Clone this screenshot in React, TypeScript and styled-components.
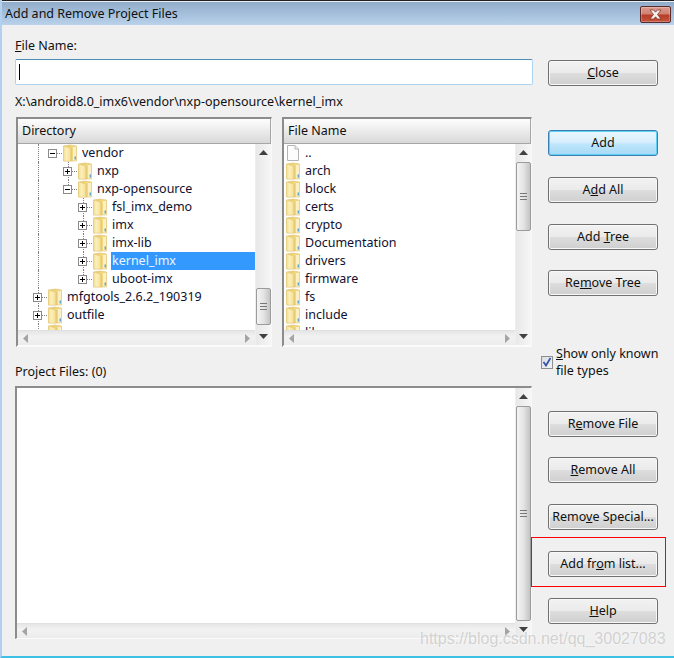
import React from "react";
import styled, { createGlobalStyle } from "styled-components";

const Global = createGlobalStyle`
  html, body { margin: 0; padding: 0; background: #f0f0f0; }
  * { box-sizing: border-box; }
  body { font-family: "Noto Sans", "DejaVu Sans", sans-serif; font-size: 12.5px; color: #101010; }
`;

const Window = styled.div`
  position: relative; width: 674px; height: 658px; overflow: hidden; background: #f0f0f0;
  display: flex; flex-direction: column;
  border-left: 2px solid #b4d0f0; border-bottom: 2px solid #3cc0e4;
`;
const TitleBar = styled.div`
  height: 25px; margin-left: -2px; padding: 0 3px 0 5px; flex: none;
  display: flex; align-items: center; justify-content: space-between;
  border-top: 1px solid #202020;
  background: linear-gradient(#8fabc9, #b9d1ea);
  box-shadow: inset 0 1px 0 #e8eef4;
`;
const Title = styled.span`font-size: 12.5px; color: #101010;`;
const CloseX = styled.div`
  width: 31px; height: 17px; margin-top: 2px; border: 1px solid #5a2a2a; border-radius: 2px;
  display: flex; align-items: center; justify-content: center;
  background: linear-gradient(#dd9a8e 0%, #cf8274 45%, #b83c26 55%, #c4553e 100%);
  box-shadow: inset 0 0 0 1px rgba(255,255,255,.25);
`;
const Body = styled.div`
  flex: 1; display: flex; padding-left: 13px;
`;
const LeftCol = styled.div`width: 518px; display: flex; flex-direction: column; padding-top: 12px;`;
const RightCol = styled.div`width: 134px; margin-left: 7px; display: flex; flex-direction: column; padding-top: 35px;`;
const Label = styled.div<{ $top?: number }>`
  height: 16px; line-height: 18px; margin-top: ${p => p.$top ?? 0}px; white-space: nowrap;
`;
const Input = styled.div`
  height: 26px; margin-top: 6px; background: #fff; display: flex; align-items: center; padding-left: 3px;
  border: 1px solid #aed3ee; border-top-color: #4f8db8; border-radius: 2px;
`;
const Caret = styled.span`width: 1px; height: 16px; background: #000;`;
const PanelRow = styled.div`display: flex; gap: 10px; margin: 8px 0 0 1px; height: 230px;`;
const Panel = styled.div<{ $w: number }>`
  width: ${p => p.$w}px; display: flex; flex-direction: column; background: #fff; overflow: hidden;
  border-top: 2px solid #8c8c8c; border-left: 2px solid #8c8c8c;
  border-right: 1px solid #f8f8f8; border-bottom: 2px solid #fbfbfb;
`;
const Header = styled.div`
  height: 25px; flex: none; padding-left: 4px; line-height: 23px;
  background: linear-gradient(#fefefe, #d8d8d8);
  border-bottom: 1px solid #a6a6a6; border-right: 1px solid #a6a6a6;
`;
const PanelBody = styled.div`flex: 1; min-height: 0; display: grid; grid-template-columns: 1fr 16px; background: #fff;`;
const Main = styled.div`min-width: 0; min-height: 0; display: flex; flex-direction: column;`;
const Rows = styled.div<{ $pad: number }>`flex: 1; min-height: 0; overflow: hidden; padding-left: ${p => p.$pad}px;`;
const HBar = styled.div`
  height: 15px; flex: none; display: flex; align-items: center; justify-content: space-between; padding: 0 5px;
  background: linear-gradient(#e6e6e6, #f2f2f2 40%, #ececec); border-top: 1px solid #e0e0e0;
`;
const VBar = styled.div`
  display: flex; flex-direction: column; align-items: center;
  background: linear-gradient(90deg, #e8e8e8, #f6f6f6); border-left: 1px solid #eee;
`;
const VTrack = styled.div`flex: 1; width: 100%; min-height: 0;`;
const Arrow = styled.svg`flex: none; display: block;`;
const ArrowBox = styled.div`height: 17px; flex: none; display: flex; align-items: center; justify-content: center;`;
const Thumb = styled.div<{ $top: number; $h: number }>`
  width: 15px; height: ${p => p.$h}px; margin-top: ${p => p.$top}px;
  border: 1px solid #9b9b9b; border-radius: 2px;
  background: linear-gradient(90deg, #f4f4f4, #e4e4e4 50%, #c4c4c4);
  display: flex; align-items: center; justify-content: center;
`;
const Grip = styled.div`
  width: 7px; height: 7px;
  background: repeating-linear-gradient(#777 0 1px, transparent 1px 3px);
`;
const TreeRow = styled.div`height: 18px; display: flex; align-items: stretch;`;
const GuideCell = styled.div`width: 15px; flex: none; display: flex;`;
const Guide = styled.div`margin-left: 8px; border-left: 1px dotted #808080; height: 100%;`;
const RowLabel = styled.div<{ $sel?: boolean }>`
  flex: 1; margin-left: 4px; padding-left: 1px; line-height: 17px; white-space: nowrap;
  background: ${p => (p.$sel ? "#3399ff" : "transparent")};
  color: ${p => (p.$sel ? "#eef6ff" : "#101030")};
`;
const ExpanderSvg = styled.svg`flex: none; width: 18px; height: 18px; display: block;`;
const IconSvg = styled.svg`flex: none; width: 14px; height: 18px; display: block;`;
const ListBox = styled.div`
  height: 253px; margin-top: 7px; width: 517px; display: flex; flex-direction: column; overflow: hidden;
  border-top: 2px solid #8c8c8c; border-left: 2px solid #8c8c8c; border-right: 1px solid #f8f8f8; border-bottom: 1px solid #fbfbfb;
`;
const Btn = styled.div<{ $top: number; $active?: boolean }>`
  width: 110px; height: 26px; margin: ${p => p.$top}px 0 0 8px; flex: none; padding-bottom: 2px;
  display: flex; align-items: center; justify-content: center; white-space: nowrap;
  border-radius: 3px; color: #101010;
  border: 1px solid ${p => (p.$active ? "#3c7fb1" : "#707070")};
  background: ${p => (p.$active
    ? "linear-gradient(#eaf6fd 0%, #d9f0fc 45%, #bee6fd 55%, #a7d9f5 100%)"
    : "linear-gradient(#f2f2f2 0%, #ebebeb 48%, #dddddd 52%, #cfcfcf 100%)")};
  box-shadow: inset 0 0 0 1px ${p => (p.$active ? "#5fd0f5" : "#f8f8f8")};
`;
const CheckRow = styled.div`display: flex; align-items: center; margin-top: 49px; padding-left: 1px; height: 33px; gap: 3px;`;
const CheckBox = styled.div`
  width: 12px; height: 13px; border: 1px solid #8e8f8f; background: linear-gradient(135deg, #d8dde4, #f4f4f6);
  display: flex; align-items: center; justify-content: center; flex: none; margin-top: 1px;
`;
const CheckText = styled.div`line-height: 17px;`;
const RedBox = styled.div`
  position: absolute; left: 529px; top: 537px; width: 135px; height: 50px; border: 1px solid #ff0000; pointer-events: none;
`;
const Watermark = styled.div`
  position: absolute; left: 418px; top: 630px; font-family: "Liberation Sans", sans-serif; font-size: 16px; white-space: nowrap;
  color: rgba(175,175,175,.55); text-shadow: 0 0 2px rgba(255,255,255,.95);
`;

const Folder = () => (
  <IconSvg viewBox="0 0 14 18">
    <defs>
      <linearGradient id="fb" x1="0" y1="0" x2="1" y2="0">
        <stop offset="0" stopColor="#e8c765" /><stop offset="1" stopColor="#f5de8c" />
      </linearGradient>
      <linearGradient id="ff" x1="0" y1="0" x2="1" y2="0">
        <stop offset="0" stopColor="#f3dc8c" /><stop offset=".35" stopColor="#fbefbd" /><stop offset=".75" stopColor="#f8e49c" /><stop offset="1" stopColor="#e3c262" />
      </linearGradient>
    </defs>
    <path d="M0.5 2 L7 1 L13.5 2 V17 H0.5 Z" fill="url(#fb)" stroke="#dcbf6c" strokeWidth=".6" />
    <path d="M0.5 2 L8.5 4.5 V17 H0.5 Z" fill="url(#ff)" stroke="#e4ca80" strokeWidth=".5" />
    <rect x="10" y="3" width="3" height="13.5" fill="#fbf0c4" />
    <rect x="11.5" y="12.5" width="1.5" height="3" fill="#5fa8d8" />
  </IconSvg>
);
const FileIcon = () => (
  <IconSvg viewBox="0 0 14 18">
    <path d="M1.5 1.5 H9 L12.5 5 V16.5 H1.5 Z" fill="#fdfdfd" stroke="#b4b4b4" />
    <path d="M9 1.5 V5 H12.5" fill="#eee" stroke="#b4b4b4" />
  </IconSvg>
);
const Expander = ({ open, top, bottom }: { open?: boolean; top?: boolean; bottom?: boolean }) => (
  <ExpanderSvg viewBox="0 0 18 18">
    {top && <path d="M8.5 0 V5" stroke="#808080" strokeDasharray="1 1" />}
    {bottom && <path d="M8.5 13 V18" stroke="#808080" strokeDasharray="1 1" />}
    <path d="M12 9.5 H18" stroke="#808080" strokeDasharray="1 1" />
    <rect x="3.5" y="5.5" width="8" height="8" fill="#fff" stroke="#8a8a8a" />
    <path d="M5 9.5 H10" stroke="#000" />
    {!open && <path d="M7.5 7 V12" stroke="#000" />}
  </ExpanderSvg>
);
const Stem = () => (
  <ExpanderSvg viewBox="0 0 18 18">
    <path d="M8.5 0 V18" stroke="#808080" strokeDasharray="1 1" />
  </ExpanderSvg>
);
const Up = () => <Arrow width="9" height="5" viewBox="0 0 9 5"><path d="M4.5 0 L9 5 H0 Z" fill="#404040" /></Arrow>;
const Down = () => <Arrow width="9" height="5" viewBox="0 0 9 5"><path d="M0 0 H9 L4.5 5 Z" fill="#404040" /></Arrow>;
const Left = () => <Arrow width="5" height="9" viewBox="0 0 5 9"><path d="M5 0 V9 L0 4.5 Z" fill="#a4a4a4" /></Arrow>;
const Right = () => <Arrow width="5" height="9" viewBox="0 0 5 9"><path d="M0 0 V9 L5 4.5 Z" fill="#a4a4a4" /></Arrow>;

const VScroll = ({ top, h }: { top: number; h: number }) => (
  <VBar>
    <ArrowBox><Up /></ArrowBox>
    <VTrack><Thumb $top={top} $h={h}><Grip /></Thumb></VTrack>
    <ArrowBox><Down /></ArrowBox>
  </VBar>
);
const HScroll = () => <HBar><Left /><Right /></HBar>;

type Node = { name: string; guides: boolean[]; open?: boolean; top?: boolean; bottom?: boolean; sel?: boolean };
const T = true, F = false;
const tree: Node[] = [
  { name: "vendor", guides: [T], open: T },
  { name: "nxp", guides: [T, F], top: T, bottom: T },
  { name: "nxp-opensource", guides: [T, F], open: T, top: T },
  { name: "fsl_imx_demo", guides: [T, F, F], top: T, bottom: T },
  { name: "imx", guides: [T, F, F], top: T, bottom: T },
  { name: "imx-lib", guides: [T, F, F], top: T, bottom: T },
  { name: "kernel_imx", guides: [T, F, F], top: T, bottom: T, sel: T },
  { name: "uboot-imx", guides: [T, F, F], top: T },
  { name: "mfgtools_2.6.2_190319", guides: [], top: T, bottom: T },
  { name: "outfile", guides: [], top: T, bottom: T },
];
const files = ["arch", "block", "certs", "crypto", "Documentation", "drivers", "firmware", "fs", "include", "lib"];

export default function App() {
  return (
    <>
      <Global />
      <Window>
        <TitleBar>
          <Title>Add and Remove Project Files</Title>
          <CloseX>
            <svg width="15" height="11" viewBox="0 0 15 11">
              <path d="M2 1 H5.5 L7.5 3.2 L9.5 1 H13 L9.5 5.5 L13 10 H9.5 L7.5 7.8 L5.5 10 H2 L5.5 5.5 Z" fill="#f6f2f0" stroke="#7a2a20" strokeWidth=".7" />
            </svg>
          </CloseX>
        </TitleBar>
        <Body>
          <LeftCol>
            <Label><u>F</u>ile Name:</Label>
            <Input><Caret /></Input>
            <Label $top={8}>X:\android8.0_imx6\vendor\nxp-opensource\kernel_imx</Label>
            <PanelRow>
              <Panel $w={256}>
                <Header>Directory</Header>
                <PanelBody>
                  <Main>
                    <Rows $pad={12}>
                      {tree.map(n => (
                        <TreeRow key={n.name}>
                          {n.guides.map((g, j) => <GuideCell key={j}>{g && <Guide />}</GuideCell>)}
                          <Expander open={n.open} top={n.top} bottom={n.bottom} />
                          <Folder />
                          <RowLabel $sel={n.sel}>{n.name}</RowLabel>
                        </TreeRow>
                      ))}
                      <TreeRow><Stem /><Folder /></TreeRow>
                    </Rows>
                    <HScroll />
                  </Main>
                  <VScroll top={127} h={37} />
                </PanelBody>
              </Panel>
              <Panel $w={250}>
                <Header>File Name</Header>
                <PanelBody>
                  <Main>
                    <Rows $pad={2}>
                      <TreeRow><FileIcon /><RowLabel>..</RowLabel></TreeRow>
                      {files.map(f => (
                        <TreeRow key={f}><Folder /><RowLabel>{f}</RowLabel></TreeRow>
                      ))}
                    </Rows>
                    <HScroll />
                  </Main>
                  <VScroll top={1} h={69} />
                </PanelBody>
              </Panel>
            </PanelRow>
            <Label $top={16}>Project Files: (0)</Label>
            <ListBox>
              <PanelBody>
                <Main>
                  <Rows $pad={0} />
                  <HScroll />
                </Main>
                <VScroll top={1} h={215} />
              </PanelBody>
            </ListBox>
          </LeftCol>
          <RightCol>
            <Btn $top={0}><span><u>C</u>lose</span></Btn>
            <Btn $top={44} $active>Add</Btn>
            <Btn $top={21}><span>A<u>d</u>d All</span></Btn>
            <Btn $top={21}><span>Add <u>T</u>ree</span></Btn>
            <Btn $top={20}><span>Re<u>m</u>ove Tree</span></Btn>
            <CheckRow>
              <CheckBox>
                <svg width="10" height="10" viewBox="0 0 10 10"><path d="M1.5 5 L4 8.5 L8.5 1" fill="none" stroke="#3a55a8" strokeWidth="1.8" /></svg>
              </CheckBox>
              <CheckText><u>S</u>how only known<br />file types</CheckText>
            </CheckRow>
            <Btn $top={33}><span>R<u>e</u>move File</span></Btn>
            <Btn $top={20}><span><u>R</u>emove All</span></Btn>
            <Btn $top={21}><span>Remo<u>v</u>e Special...</span></Btn>
            <Btn $top={21}><span>Add fr<u>o</u>m list...</span></Btn>
            <Btn $top={21}><span><u>H</u>elp</span></Btn>
          </RightCol>
        </Body>
        <RedBox />
        <Watermark>https://blog.csdn.net/qq_30027083</Watermark>
      </Window>
    </>
  );
}
